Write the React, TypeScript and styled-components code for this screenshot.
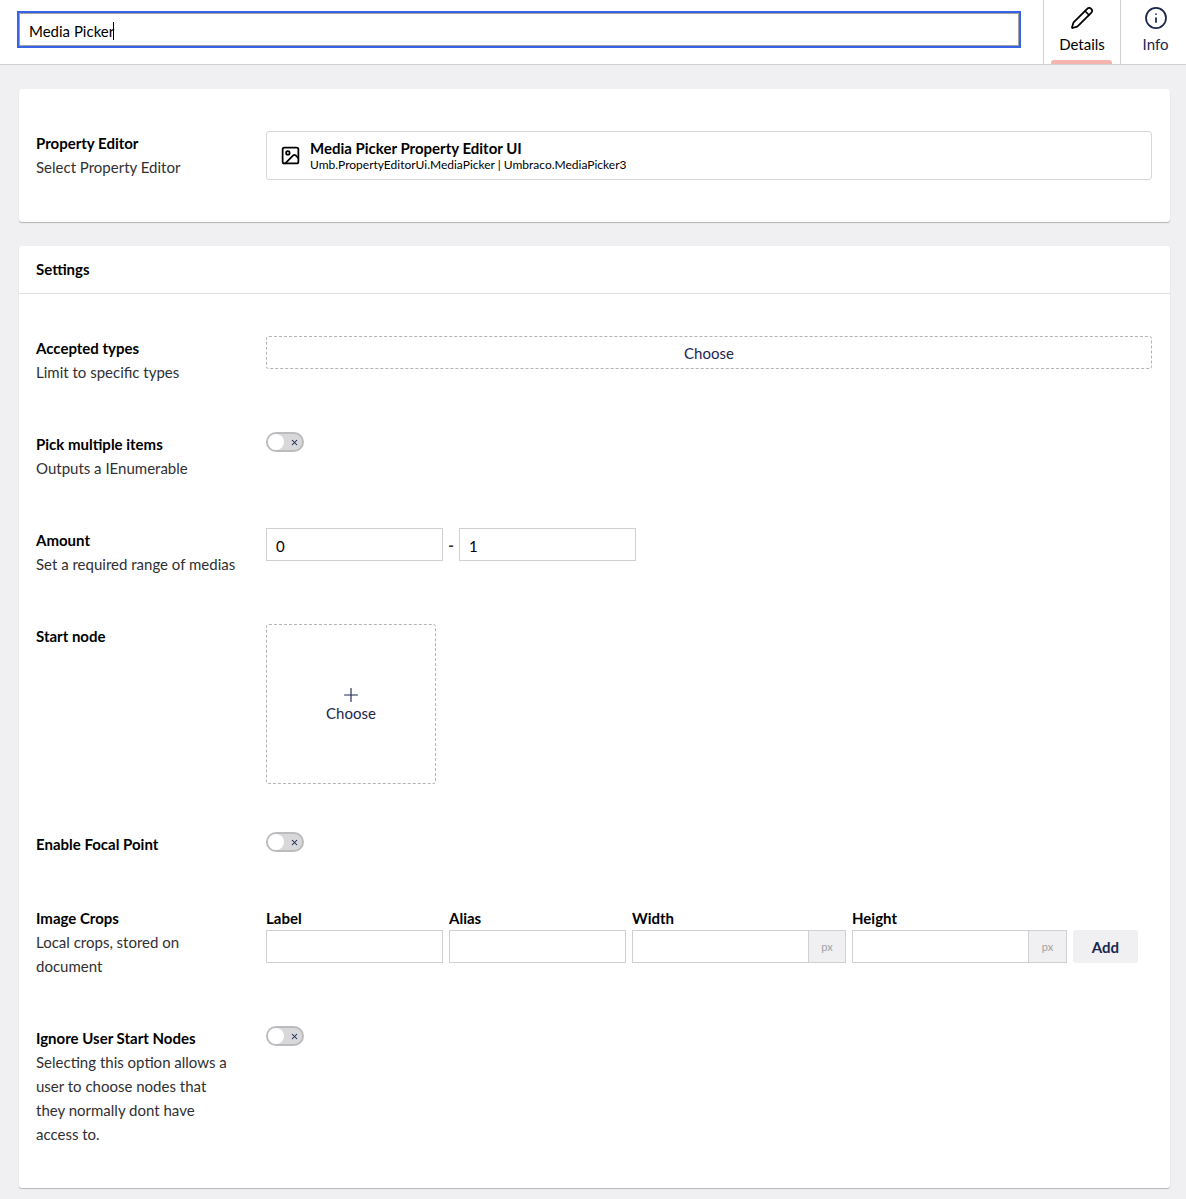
import React from 'react'
import styled, { createGlobalStyle } from 'styled-components'
import { Image, Info, Pencil, Plus, X } from 'lucide-react'

const GlobalStyle = createGlobalStyle`
  html, body {
    margin: 0;
    padding: 0;
    background: #f0f0f2;
    font-family: Lato, "Liberation Sans", sans-serif;
    font-size: 15px;
    line-height: 24px;
    color: #000;
  }
  * { box-sizing: border-box; }
`

const Header = styled.header`
  display: flex;
  align-items: stretch;
  height: 65px;
  background: #fff;
  border-bottom: 1px solid #d0d0d2;
`

const NameWrap = styled.div`
  flex: 1;
  padding: 13px 24px 18px 19px;
`

const NameField = styled.div`
  display: flex;
  align-items: center;
  height: 33px;
  padding: 2px 0 0 9px;
  border: 1px solid #a1a1a1;
  outline: 2px solid #3763e8;
`

const Caret = styled.span`
  display: inline-block;
  width: 1px;
  height: 18px;
  margin-left: -1px;
  background: #000;
`

const Tab = styled.div<{ $active?: boolean; $width: number; $shift?: number }>`
  position: relative;
  display: flex;
  flex-direction: column;
  align-items: center;
  width: ${p => p.$width}px;
  padding: 6px 0 0 ${p => p.$shift || 0}px;
  border-left: 1px solid #d0d0d2;
  color: ${p => (p.$active ? '#000' : '#1b264f')};
  line-height: 20px;

  svg {
    margin-bottom: 4px;
  }
`

const TabMark = styled.span`
  position: absolute;
  left: 7px;
  right: 8px;
  bottom: 0;
  height: 4px;
  background: #f5b5ae;
  border-radius: 3px 3px 0 0;
`

const Main = styled.main`
  display: flex;
  flex-direction: column;
  gap: 24px;
  padding: 24px 16px 11px 19px;
`

const Box = styled.section`
  background: #fff;
  border-radius: 3px;
  box-shadow: 0 1px 1px rgba(0, 0, 0, 0.25);
`

const BoxTitle = styled.h2`
  margin: 0;
  height: 48px;
  padding: 11px 17px;
  border-bottom: 1px solid #e0e0e2;
  font-size: 15px;
  font-weight: 700;
  line-height: 24px;
`

const BoxBody = styled.div`
  display: flex;
  flex-direction: column;
  gap: 48px;
  padding: 42px 18px 42px 17px;
`

const Row = styled.div`
  display: grid;
  grid-template-columns: 200px 1fr;
  column-gap: 30px;
  min-height: 26px;
`

const LabelBlock = styled.div`
  min-width: 0;
`

const Label = styled.div`
  font-weight: 700;
  color: #000;
`

const Description = styled.div`
  color: #303033;
`

const EditorCard = styled.div`
  display: flex;
  align-items: center;
  gap: 9px;
  height: 49px;
  padding-left: 13px;
  border: 1px solid #d8d7d9;
  border-radius: 3px;
`

const EditorName = styled.div`
  font-weight: 700;
  font-size: 15px;
  line-height: 17px;
  margin-top: 1px;
`

const EditorAlias = styled.div`
  font-size: 12px;
  line-height: 15px;
`

const ChooseBar = styled.button`
  display: block;
  width: 100%;
  height: 33px;
  padding: 0;
  background: #fff;
  border: 1px dashed #b3b3b6;
  border-radius: 3px;
  font: inherit;
  color: #1b264f;
`

const ChooseTile = styled.button`
  display: flex;
  flex-direction: column;
  align-items: center;
  justify-content: center;
  width: 170px;
  height: 160px;
  padding: 0;
  background: #fff;
  border: 1px dashed #b3b3b6;
  border-radius: 3px;
  font: inherit;
  color: #1b264f;
  line-height: 21px;

  svg {
    margin-bottom: -3px;
  }
`

const Toggle = styled.div`
  position: relative;
  display: flex;
  align-items: center;
  justify-content: flex-end;
  width: 38px;
  height: 20px;
  padding-right: 3px;
  background: #d8d7d9;
  border: 2px solid #bcbcbf;
  border-radius: 10px;
  color: #1b264f;
`

const ToggleKnob = styled.span`
  position: absolute;
  left: 0;
  top: 0;
  width: 16px;
  height: 16px;
  background: #fff;
  border-radius: 50%;
`

const RangeRow = styled.div`
  display: flex;
  align-items: center;
  align-self: start;
`

const RangeDash = styled.span`
  width: 16px;
  text-align: center;
  font-weight: 700;
  color: #303033;
`

const TextInput = styled.input<{ $width?: number }>`
  display: block;
  width: ${p => (p.$width ? `${p.$width}px` : '100%')};
  height: 33px;
  min-width: 0;
  padding: 2px 9px 0;
  background: #fff;
  border: 1px solid #d0d0d2;
  border-radius: 0;
  font: inherit;
  color: #000;
  outline: none;
`

const CropGrid = styled.div`
  display: grid;
  grid-template-columns: 177px 177px 214px 215px 65px;
  column-gap: 6px;
  align-items: start;
`

const CropColumn = styled.div`
  display: flex;
  flex-direction: column;
`

const CropLabel = styled.label`
  font-weight: 700;
  color: #000;
`

const AddonField = styled.div`
  display: flex;
  height: 33px;
  border: 1px solid #d0d0d2;
  border-right: none;
`

const BareInput = styled.input`
  flex: 1;
  min-width: 0;
  border: none;
  outline: none;
  font: inherit;
  background: #fff;
`

const Addon = styled.span<{ $width: number }>`
  display: flex;
  align-items: center;
  justify-content: center;
  width: ${p => p.$width}px;
  flex: none;
  background: #f0f0f2;
  border-left: 1px solid #d0d0d2;
  border-right: 1px solid #d0d0d2;
  color: #a1a1a1;
  font-size: 11px;
`

const AddButton = styled.button`
  height: 33px;
  margin-top: 24px;
  padding: 0;
  background: #f0f0f2;
  border: none;
  border-radius: 3px;
  font: inherit;
  font-weight: 700;
  color: #1b264f;
`

const OffToggle = () => (
  <Toggle>
    <ToggleKnob />
    <X size={9} strokeWidth={2.75} />
  </Toggle>
)

export default function App() {
  return (
    <>
      <GlobalStyle />
      <Header>
        <NameWrap>
          <NameField>
            Media Picker
            <Caret />
          </NameField>
        </NameWrap>
        <Tab $active $width={77}>
          <Pencil size={24} strokeWidth={1.75} />
          Details
          <TabMark />
        </Tab>
        <Tab $width={66} $shift={4}>
          <Info size={24} strokeWidth={1.75} />
          Info
        </Tab>
      </Header>
      <Main>
        <Box>
          <BoxBody>
            <Row>
              <LabelBlock>
                <Label>Property Editor</Label>
                <Description>Select Property Editor</Description>
              </LabelBlock>
              <EditorCard>
                <Image size={21} strokeWidth={2} />
                <div>
                  <EditorName>Media Picker Property Editor UI</EditorName>
                  <EditorAlias>Umb.PropertyEditorUi.MediaPicker | Umbraco.MediaPicker3</EditorAlias>
                </div>
              </EditorCard>
            </Row>
          </BoxBody>
        </Box>
        <Box>
          <BoxTitle>Settings</BoxTitle>
          <BoxBody>
            <Row>
              <LabelBlock>
                <Label>Accepted types</Label>
                <Description>Limit to specific types</Description>
              </LabelBlock>
              <ChooseBar>Choose</ChooseBar>
            </Row>
            <Row>
              <LabelBlock>
                <Label>Pick multiple items</Label>
                <Description>Outputs a IEnumerable</Description>
              </LabelBlock>
              <OffToggle />
            </Row>
            <Row>
              <LabelBlock>
                <Label>Amount</Label>
                <Description>Set a required range of medias</Description>
              </LabelBlock>
              <RangeRow>
                <TextInput $width={177} defaultValue="0" />
                <RangeDash>-</RangeDash>
                <TextInput $width={177} defaultValue="1" />
              </RangeRow>
            </Row>
            <Row>
              <LabelBlock>
                <Label>Start node</Label>
              </LabelBlock>
              <ChooseTile>
                <Plus size={22} strokeWidth={1.25} />
                Choose
              </ChooseTile>
            </Row>
            <Row>
              <LabelBlock>
                <Label>Enable Focal Point</Label>
              </LabelBlock>
              <OffToggle />
            </Row>
            <Row>
              <LabelBlock>
                <Label>Image Crops</Label>
                <Description>Local crops, stored on document</Description>
              </LabelBlock>
              <CropGrid>
                <CropColumn>
                  <CropLabel>Label</CropLabel>
                  <TextInput />
                </CropColumn>
                <CropColumn>
                  <CropLabel>Alias</CropLabel>
                  <TextInput />
                </CropColumn>
                <CropColumn>
                  <CropLabel>Width</CropLabel>
                  <AddonField>
                    <BareInput />
                    <Addon $width={38}>px</Addon>
                  </AddonField>
                </CropColumn>
                <CropColumn>
                  <CropLabel>Height</CropLabel>
                  <AddonField>
                    <BareInput />
                    <Addon $width={39}>px</Addon>
                  </AddonField>
                </CropColumn>
                <AddButton>Add</AddButton>
              </CropGrid>
            </Row>
            <Row>
              <LabelBlock>
                <Label>Ignore User Start Nodes</Label>
                <Description>Selecting this option allows a user to choose nodes that they normally dont have access to.</Description>
              </LabelBlock>
              <OffToggle />
            </Row>
          </BoxBody>
        </Box>
      </Main>
    </>
  )
}
